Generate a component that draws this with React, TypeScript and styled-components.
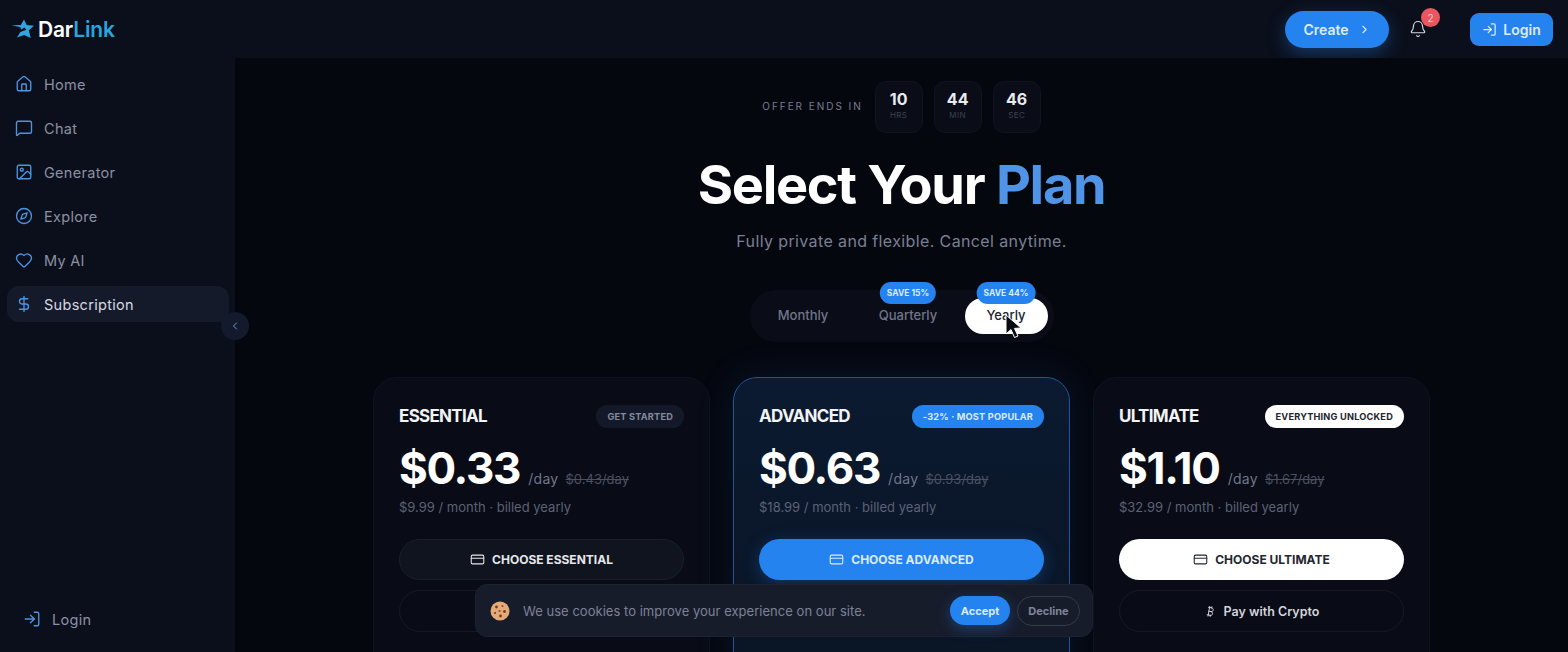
import { Bell, Bitcoin, ChevronLeft, ChevronRight, Compass, CreditCard, DollarSign, Heart, House, Image, LogIn, MessageSquare } from 'lucide-react';
import styled, { createGlobalStyle } from 'styled-components';

const GlobalStyle = createGlobalStyle`
    html, body {
        margin: 0;
        height: 100%;
        overflow: hidden;
        background: #05070f;
    }
    * {
        box-sizing: border-box;
    }
    body {
        font-family: Inter, 'Liberation Sans', sans-serif;
        color: #fff;
    }
`;

const navItems = [
    { label: 'Home', icon: House },
    { label: 'Chat', icon: MessageSquare },
    { label: 'Generator', icon: Image },
    { label: 'Explore', icon: Compass },
    { label: 'My AI', icon: Heart },
    { label: 'Subscription', icon: DollarSign, active: true },
];

const plans = [
    { name: 'ESSENTIAL', badge: 'GET STARTED', price: '$0.33', old: '$0.43/day', month: '$9.99', cta: 'CHOOSE ESSENTIAL', tone: 'dark' as const },
    { name: 'ADVANCED', badge: '-32% · MOST POPULAR', price: '$0.63', old: '$0.93/day', month: '$18.99', cta: 'CHOOSE ADVANCED', tone: 'blue' as const },
    { name: 'ULTIMATE', badge: 'EVERYTHING UNLOCKED', price: '$1.10', old: '$1.67/day', month: '$32.99', cta: 'CHOOSE ULTIMATE', tone: 'white' as const },
];

const countdown = [
    { value: '10', unit: 'HRS' },
    { value: '44', unit: 'MIN' },
    { value: '46', unit: 'SEC' },
];

export default function App() {
    return (
        <Page>
            <GlobalStyle />
            <TopBar>
                <Logo>
                    <svg width="25" height="20" viewBox="0 0 24 20">
                        <path
                            d="M13.5 0.5l2.6 5.4 7.4 0.9-5.2 4.4 1.9 7.8-6.6-3.1-7.1 2.6 3.4-5.6 6.1-2.1-2.2-2.4-3 2.2-1.1-2.6-8.7-1.4 7.8-0.5 1.4 0.1z"
                            fill="#2fa6e2"
                        />
                    </svg>
                    <span>
                        Dar<LogoAccent>Link</LogoAccent>
                    </span>
                </Logo>
                <TopActions>
                    <CreateButton>
                        Create
                        <ChevronRight size={13} />
                    </CreateButton>
                    <BellWrap>
                        <Bell size={18} strokeWidth={1.6} />
                        <BellCount>2</BellCount>
                    </BellWrap>
                    <LoginButton>
                        <LogIn size={15} />
                        Login
                    </LoginButton>
                </TopActions>
            </TopBar>
            <Body>
                <Sidebar>
                    <Nav>
                        {navItems.map((item) => (
                            <NavItem key={item.label} $active={item.active}>
                                <item.icon size={18} color="#4f94e0" strokeWidth={1.8} />
                                {item.label}
                            </NavItem>
                        ))}
                    </Nav>
                    <Collapse>
                        <ChevronLeft size={12} />
                    </Collapse>
                    <SideLogin>
                        <LogIn size={18} color="#4f94e0" strokeWidth={1.8} />
                        Login
                    </SideLogin>
                </Sidebar>
                <Main>
                    <Offer>
                        <OfferLabel>OFFER ENDS IN</OfferLabel>
                        {countdown.map((c) => (
                            <TimeBox key={c.unit}>
                                <TimeValue>{c.value}</TimeValue>
                                <TimeUnit>{c.unit}</TimeUnit>
                            </TimeBox>
                        ))}
                    </Offer>
                    <Title>
                        Select Your <TitleAccent>Plan</TitleAccent>
                    </Title>
                    <Subtitle>Fully private and flexible. Cancel anytime.</Subtitle>
                    <Toggle>
                        <ToggleOption $width={107}>Monthly</ToggleOption>
                        <ToggleOption $width={103}>
                            Quarterly
                            <SaveBadge>SAVE 15%</SaveBadge>
                        </ToggleOption>
                        <ToggleOption $width={83} $active>
                            Yearly
                            <SaveBadge>SAVE 44%</SaveBadge>
                            <Cursor width="18" height="26" viewBox="0 0 18 26">
                                <path d="M2 1v19l5-4.5 3.5 8 3.5-1.5-3.5-7.6 6.5-.4z" fill="#0b0d14" stroke="#fff" strokeWidth="1" />
                            </Cursor>
                        </ToggleOption>
                    </Toggle>
                    <Cards>
                        {plans.map((plan) => (
                            <Card key={plan.name} $featured={plan.tone === 'blue'}>
                                <CardHead>
                                    <PlanName>{plan.name}</PlanName>
                                    <PlanBadge $tone={plan.tone}>{plan.badge}</PlanBadge>
                                </CardHead>
                                <PriceRow>
                                    <Price>{plan.price}</Price>
                                    <PerDay>/day</PerDay>
                                    <OldPrice>{plan.old}</OldPrice>
                                </PriceRow>
                                <Billed>{plan.month} / month · billed yearly</Billed>
                                <ChooseButton $tone={plan.tone}>
                                    <CreditCard size={15} strokeWidth={1.7} />
                                    {plan.cta}
                                </ChooseButton>
                                <CryptoButton>
                                    <Bitcoin size={13} strokeWidth={1.8} />
                                    Pay with Crypto
                                </CryptoButton>
                            </Card>
                        ))}
                    </Cards>
                </Main>
            </Body>
            <CookieBar>
                <svg width="20" height="20" viewBox="0 0 20 20">
                    <circle cx="10" cy="10" r="9.5" fill="#e3ab78" />
                    <circle cx="6.5" cy="6" r="1.4" fill="#7b3b22" />
                    <circle cx="12.5" cy="5" r="1.1" fill="#a4442c" />
                    <circle cx="14.5" cy="10.5" r="1.4" fill="#7b3b22" />
                    <circle cx="9.5" cy="10" r="1.1" fill="#a4442c" />
                    <circle cx="5" cy="12" r="1.1" fill="#7b3b22" />
                    <circle cx="10.5" cy="15" r="1.4" fill="#7b3b22" />
                </svg>
                <CookieText>We use cookies to improve your experience on our site.</CookieText>
                <AcceptButton>Accept</AcceptButton>
                <DeclineButton>Decline</DeclineButton>
            </CookieBar>
        </Page>
    );
}

const Page = styled.div`
    position: relative;
    width: 1568px;
    height: 652px;
    overflow: hidden;
    display: flex;
    flex-direction: column;
`;
const TopBar = styled.header`
    height: 58px;
    flex: none;
    background: #0b0f1b;
    display: flex;
    align-items: center;
    justify-content: space-between;
    padding: 0 15px 0 10px;
`;
const Logo = styled.div`
    display: flex;
    align-items: center;
    gap: 3px;
    font-size: 21px;
    font-weight: 600;
    letter-spacing: -0.2px;
`;
const LogoAccent = styled.span`
    color: #2aa4dc;
`;
const TopActions = styled.div`
    display: flex;
    align-items: center;
`;
const CreateButton = styled.div`
    width: 104px;
    height: 37px;
    border-radius: 19px;
    background: #2583f0;
    box-shadow: 0 6px 18px rgba(37, 131, 240, 0.35);
    display: flex;
    align-items: center;
    justify-content: center;
    gap: 9px;
    font-size: 14px;
    font-weight: 600;
    color: #dcebfd;
`;
const BellWrap = styled.div`
    position: relative;
    display: flex;
    margin: 0 43px 0 20px;
    color: #d5d8de;
`;
const BellCount = styled.span`
    position: absolute;
    top: -12px;
    left: 12px;
    width: 19px;
    height: 19px;
    border-radius: 50%;
    background: #e9565f;
    color: #f7c5c8;
    font-size: 10px;
    display: flex;
    align-items: center;
    justify-content: center;
`;
const LoginButton = styled.div`
    width: 83px;
    height: 33px;
    border-radius: 9px;
    background: #2583f0;
    display: flex;
    align-items: center;
    justify-content: center;
    gap: 6px;
    font-size: 14px;
    font-weight: 600;
    color: #dcebfd;
`;
const Body = styled.div`
    flex: 1;
    display: flex;
    min-height: 0;
`;
const Sidebar = styled.aside`
    position: relative;
    width: 235px;
    flex: none;
    background: #0b0f1b;
    padding: 8px 7px 0;
    display: flex;
    flex-direction: column;
    justify-content: space-between;
`;
const Nav = styled.nav`
    display: flex;
    flex-direction: column;
    gap: 8px;
`;
const NavItem = styled.div<{ $active?: boolean }>`
    height: 36px;
    border-radius: 12px;
    display: flex;
    align-items: center;
    gap: 11px;
    padding-left: 8px;
    font-size: 14.5px;
    letter-spacing: 0.3px;
    background: ${(p) => (p.$active ? '#151a2b' : 'transparent')};
    color: ${(p) => (p.$active ? '#d6d9e2' : '#8b90a3')};
    width: 222px;
`;
const Collapse = styled.div`
    position: absolute;
    top: 254px;
    left: 221px;
    width: 28px;
    height: 28px;
    border-radius: 50%;
    background: #131a2c;
    color: #5f9ade;
    display: flex;
    align-items: center;
    justify-content: center;
`;
const SideLogin = styled.div`
    display: flex;
    align-items: center;
    gap: 11px;
    padding: 0 0 24px 16px;
    font-size: 14.5px;
    letter-spacing: 0.3px;
    color: #8b90a3;
`;
const Main = styled.main`
    flex: 1;
    min-width: 0;
    padding-top: 23px;
    background: #05070f;
    display: flex;
    flex-direction: column;
    align-items: center;
    > * {
        flex: none;
    }
`;
const Offer = styled.div`
    display: flex;
    align-items: center;
    gap: 11px;
`;
const OfferLabel = styled.span`
    font-size: 10px;
    letter-spacing: 1.95px;
    color: #777c90;
    margin: 0 1px 2px 0;
`;
const TimeBox = styled.div`
    width: 48px;
    height: 52px;
    border-radius: 11px;
    background: #0a0d17;
    border: 1px solid #10141f;
    display: flex;
    flex-direction: column;
    align-items: center;
    padding-top: 8px;
    gap: 2px;
`;
const TimeValue = styled.span`
    font-size: 16px;
    font-weight: 700;
    line-height: 18px;
    color: #e9eaee;
`;
const TimeUnit = styled.span`
    font-size: 8px;
    letter-spacing: 0.4px;
    color: #3d4152;
`;
const Title = styled.h1`
    margin: 17px 0 0;
    font-size: 54px;
    line-height: 70px;
    font-weight: 700;
    letter-spacing: -1.3px;
`;
const TitleAccent = styled.span`
    color: #4f94e6;
`;
const Subtitle = styled.p`
    margin: 9px 0 0;
    font-size: 16px;
    line-height: 24px;
    letter-spacing: 0.38px;
    color: #7a7f93;
`;
const Toggle = styled.div`
    margin-top: 37px;
    width: 304px;
    height: 52px;
    border-radius: 26px;
    background: #0a0d17;
    display: flex;
    align-items: center;
    padding: 0 6px 0 0;
`;
const ToggleOption = styled.div<{ $active?: boolean; $width: number }>`
    position: relative;
    flex: 0 0 ${(p) => p.$width}px;
    margin-left: ${(p) => (p.$active ? 'auto' : '0')};
    height: 36px;
    padding-bottom: 3px;
    border-radius: 18px;
    display: flex;
    align-items: center;
    justify-content: center;
    font-size: 13px;
    font-weight: 500;
    background: ${(p) => (p.$active ? '#fff' : 'transparent')};
    color: ${(p) => (p.$active ? '#20232e' : '#70758a')};
`;
const SaveBadge = styled.span`
    position: absolute;
    top: -16px;
    left: 50%;
    transform: translateX(-50%);
    height: 22px;
    padding: 0 7px;
    border-radius: 11px;
    background: #2583f0;
    color: #dcebfd;
    font-size: 8.5px;
    font-weight: 700;
    white-space: nowrap;
    display: flex;
    align-items: center;
`;
const Cursor = styled.svg`
    position: absolute;
    top: 16px;
    left: 39px;
`;
const Cards = styled.div`
    margin-top: 35px;
    display: flex;
    gap: 23px;
`;
const Card = styled.section<{ $featured?: boolean }>`
    width: 337px;
    height: 320px;
    border-radius: 24px;
    padding: 26px 25px;
    border: 1px solid ${(p) => (p.$featured ? '#1f5796' : '#0f1320')};
    background: ${(p) => (p.$featured ? 'linear-gradient(180deg, #0b1a30 0%, #0a1424 100%)' : '#090c16')};
    box-shadow: ${(p) => (p.$featured ? '0 0 40px rgba(37, 131, 240, 0.12)' : 'none')};
`;
const CardHead = styled.div`
    display: flex;
    align-items: center;
    justify-content: space-between;
    height: 24px;
`;
const PlanName = styled.span`
    font-size: 17px;
    font-weight: 700;
    letter-spacing: -0.7px;
    color: #f2f3f5;
`;
const PlanBadge = styled.span<{ $tone: 'dark' | 'blue' | 'white' }>`
    height: 23px;
    padding: 0 11px;
    border-radius: 12px;
    display: flex;
    align-items: center;
    font-size: 9.2px;
    font-weight: 700;
    letter-spacing: 0.2px;
    background: ${(p) => (p.$tone === 'blue' ? '#2583f0' : p.$tone === 'white' ? '#fff' : '#141929')};
    color: ${(p) => (p.$tone === 'blue' ? '#dcebfd' : p.$tone === 'white' ? '#23262f' : '#848a9e')};
`;
const PriceRow = styled.div`
    margin-top: 16px;
    display: flex;
    align-items: baseline;
    height: 48px;
`;
const Price = styled.span`
    font-size: 44px;
    font-weight: 700;
    line-height: 48px;
    letter-spacing: -1.3px;
`;
const PerDay = styled.span`
    margin-left: 8px;
    font-size: 14px;
    letter-spacing: 0.3px;
    color: #71768a;
`;
const OldPrice = styled.span`
    margin-left: 7px;
    font-size: 13px;
    color: #4a4f62;
    text-decoration: line-through;
`;
const Billed = styled.div`
    margin-top: 6px;
    font-size: 13px;
    line-height: 18px;
    color: #5c6175;
`;
const ChooseButton = styled.div<{ $tone: 'dark' | 'blue' | 'white' }>`
    margin-top: 23px;
    height: 41px;
    border-radius: 21px;
    display: flex;
    align-items: center;
    justify-content: center;
    gap: 7px;
    font-size: 12px;
    font-weight: 700;
    background: ${(p) => (p.$tone === 'blue' ? '#2583f0' : p.$tone === 'white' ? '#fff' : '#10141f')};
    color: ${(p) => (p.$tone === 'blue' ? '#dcebfd' : p.$tone === 'white' ? '#23262f' : '#e6e7eb')};
    border: ${(p) => (p.$tone === 'dark' ? '1px solid #1a1f2e' : 'none')};
    box-shadow: ${(p) => (p.$tone === 'blue' ? '0 4px 18px rgba(37, 131, 240, 0.3)' : 'none')};
`;
const CryptoButton = styled.div`
    margin-top: 10px;
    height: 42px;
    border-radius: 21px;
    border: 1px solid #151926;
    display: flex;
    align-items: center;
    justify-content: center;
    gap: 7px;
    font-size: 12.5px;
    font-weight: 600;
    color: #d3d5dc;
`;
const CookieBar = styled.div`
    position: absolute;
    left: 475px;
    top: 584px;
    width: 618px;
    height: 53px;
    border-radius: 12px;
    background: #171c2b;
    border: 1px solid #1c2231;
    display: flex;
    align-items: center;
    padding: 0 12px 0 14px;
`;
const CookieText = styled.span`
    margin-left: 13px;
    flex: 1;
    font-size: 13px;
    letter-spacing: 0.03px;
    color: #7d8295;
`;
const AcceptButton = styled.div`
    width: 60px;
    height: 29px;
    border-radius: 15px;
    background: #2583f0;
    box-shadow: 0 4px 14px rgba(37, 131, 240, 0.35);
    display: flex;
    align-items: center;
    justify-content: center;
    font-size: 11px;
    font-weight: 700;
    color: #dcebfd;
`;
const DeclineButton = styled.div`
    margin-left: 7px;
    width: 63px;
    height: 30px;
    border-radius: 15px;
    border: 1px solid #343a4a;
    display: flex;
    align-items: center;
    justify-content: center;
    font-size: 11px;
    font-weight: 700;
    color: #80859a;
`;
